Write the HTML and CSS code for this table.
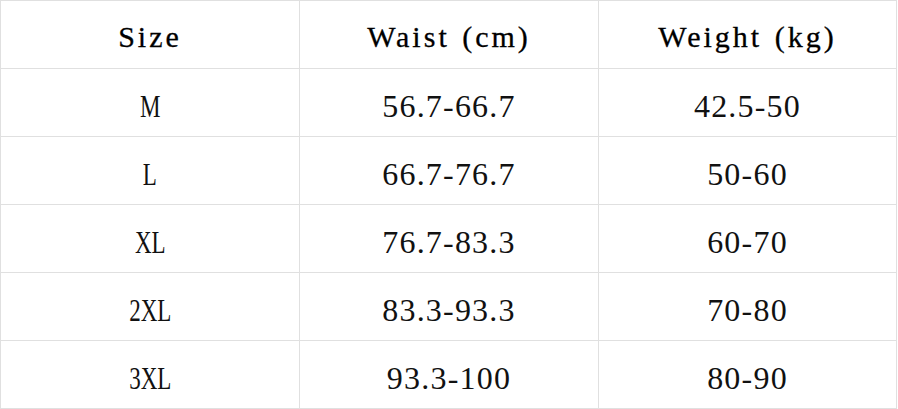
FILE: index.html
```html
<!DOCTYPE html>
<html lang="en">
<head>
<meta charset="utf-8">
<title>Size chart</title>
<link rel="stylesheet" href="styles.css">
</head>
<body>
<div class="chart">
  <div class="cell head">Size</div>
  <div class="cell head">Waist (cm)</div>
  <div class="cell head">Weight (kg)</div>
  <div class="cell"><span class="narrow">M</span></div>
  <div class="cell">56.7-66.7</div>
  <div class="cell">42.5-50</div>
  <div class="cell"><span class="narrow">L</span></div>
  <div class="cell">66.7-76.7</div>
  <div class="cell">50-60</div>
  <div class="cell"><span class="narrow">XL</span></div>
  <div class="cell">76.7-83.3</div>
  <div class="cell">60-70</div>
  <div class="cell"><span class="narrow">2XL</span></div>
  <div class="cell">83.3-93.3</div>
  <div class="cell">70-80</div>
  <div class="cell"><span class="narrow">3XL</span></div>
  <div class="cell">93.3-100</div>
  <div class="cell">80-90</div>
</div>
</body>
</html>
```
FILE: styles.css
```css
html, body {
  margin: 0;
  padding: 0;
  background: #ffffff;
}
.chart {
  display: grid;
  grid-template-columns: 298px 298px 297px;
  grid-auto-rows: 67px;
  gap: 1px;
  padding: 1px;
  width: max-content;
  background: #e0e0e0;
}
.cell {
  background: #ffffff;
  display: flex;
  align-items: center;
  justify-content: center;
  padding-top: 7px;
  box-sizing: border-box;
  font-family: "Liberation Serif", serif;
  font-size: 32px;
  letter-spacing: 1.2px;
  color: #111111;
}
.narrow {
  display: inline-block;
  letter-spacing: 0;
  transform: scaleX(0.72);
}
.head {
  padding-top: 5px;
  font-size: 30px;
  letter-spacing: 3px;
  word-spacing: 2px;
  color: #000000;
  -webkit-text-stroke: 0.3px #000000;
}
```
